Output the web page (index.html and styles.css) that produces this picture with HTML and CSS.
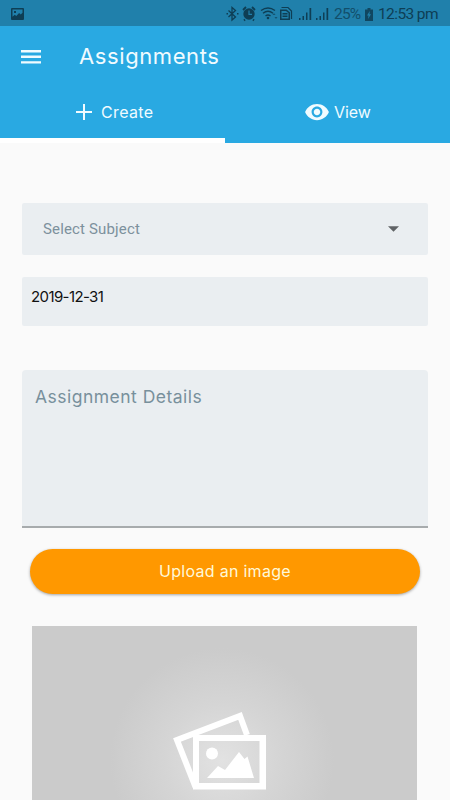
FILE: index.html
```html
<!DOCTYPE html>
<html lang="en">
<head>
<meta charset="utf-8">
<title>Assignments</title>
<link rel="stylesheet" href="styles.css">
</head>
<body>
<div class="status">
  <svg class="status-photo" width="13" height="13" viewBox="0 0 13 13"><path fill-rule="evenodd" d="M1 0h11a1 1 0 0 1 1 1v10a1 1 0 0 1-1 1H1a1 1 0 0 1-1-1V1a1 1 0 0 1 1-1zM1.500 1.500v7.200l2.200-2 1.600 1.200 2.800-3 1.600 1.500 1.800-1.600V1.500zM3 3h2v2H3z"/></svg>
  <svg class="status-icons" width="105" height="16" viewBox="225 6 105 16">
    <path d="M228.500 10.500l7 6.500-3.500 3V7.500l3.500 3-7 6.500" fill="none" stroke="#0e3e55" stroke-width="1.300"/>
    <path d="M226.500 13.100h1.500v1.500h-1.500zM237 13.100h1.500v1.500H237z"/>
    <circle cx="249" cy="14" r="5.700"/>
    <path d="M243 10l3-3M255 10l-3-3M245 19.500l-1 1M253 19.500l1 1" stroke="#0e3e55" stroke-width="1.800"/>
    <path d="M249 10.500v3.800h3" fill="none" stroke="#2080ab" stroke-width="1.200"/>
    <g fill="none" stroke="#0e3e55" stroke-width="1.400"><path d="M261 10.500q7-5 14 0M263 13.300q5-4 10 0M265.500 16q2.500-2 5 0"/></g>
    <circle cx="268" cy="18" r="1.300"/>
    <path d="M272.500 15l1.500-2 1.500 2zM274.500 17l1.500 2 1.500-2z" opacity=".65"/>
    <path fill-rule="evenodd" d="M280 9.500h6.500l3.500 3V20h-10zM281.500 11v7.500h7V13l-2.500-2zM282.500 13h5v1.500h-5zM282.500 15.500h5V17h-5z"/>
    <path d="M281.500 7.500h6.500l3.500 3.500v8" fill="none" stroke="#0e3e55" stroke-width="1.200"/>
    <path d="M299 18h1.500v2H299zM302.500 16h1.500v4h-1.500zM306 12.500h1.500V20H306zM309.500 8h1.700v12h-1.700zM316 18h1.500v2H316zM319.500 16h1.500v4h-1.500zM323 12.500h1.500V20H323zM326.500 8h1.700v12h-1.700z"/>
  </svg>
  <span class="battery-text">25%</span>
  <svg class="battery" width="8" height="13" viewBox="0 0 8 13"><path fill-rule="evenodd" d="M2.500 0h3v1.500H8V13H0V1.500h2.500zM4.800 3L2 7.500h1.600L3 11l3-4.700H4.400z"/></svg>
  <span class="clock">12:53 pm</span>
</div>
<header class="header">
  <div class="bar">
    <svg width="20" height="14" viewBox="0 0 20 14"><path d="M0 0h20v2.400H0zM0 5.600h20V8H0zM0 11.200h20v2.400H0z"/></svg>
    <h1 class="title">Assignments</h1>
  </div>
  <nav class="tabs">
    <div class="tab tab-create">
      <svg width="16" height="16" viewBox="0 0 16 16"><path d="M7 0h2v7h7v2H9v7H7V9H0V7h7z"/></svg>
      <span class="create-label">Create</span>
    </div>
    <div class="tab tab-view">
      <svg width="26" height="18" viewBox="0 3.750 24 16.500"><path d="M12 4.500C7 4.500 2.730 7.610 1 12c1.730 4.390 6 7.500 11 7.500s9.270-3.110 11-7.500c-1.730-4.390-6-7.500-11-7.500zM12 17c-2.760 0-5-2.240-5-5s2.240-5 5-5 5 2.240 5 5-2.240 5-5 5zm0-8c-1.660 0-3 1.340-3 3s1.340 3 3 3 3-1.340 3-3-1.340-3-3-3z"/></svg>
      <span class="view-label">View</span>
    </div>
  </nav>
</header>
<main class="form">
  <div class="field select"><span>Select Subject</span><svg width="11" height="6" viewBox="0 0 12 6"><path d="M0 0h12L6 6z"/></svg></div>
  <div class="field date"><span>2019-12-31</span></div>
  <div class="field details"><span>Assignment Details</span></div>
  <div class="upload"><span>Upload an image</span></div>
  <div class="preview">
    <svg width="94" height="80" viewBox="173 711 94 80">
      <path d="M195.500 787L177 740l63-24 7 19" fill="none" stroke="#fff" stroke-width="6"/>
      <path fill="#fff" fill-rule="evenodd" d="M193 735h73v54.500h-73zM199 741v42h60.500v-42z"/>
      <circle cx="212" cy="753.500" r="6" fill="#fff"/>
      <path d="M207 778l11-12 7 4 14-18 5.500 7 3-2.500L254 778z" fill="#fff"/>
    </svg>
  </div>
</main>
</body>
</html>
```

FILE: styles.css
```css
* { box-sizing: border-box; }
body {
  margin: 0;
  width: 450px;
  height: 800px;
  overflow: hidden;
  background: #fafafa;
  font-family: Inter, "Liberation Sans", sans-serif;
}
svg { display: block; flex: none; }
span, h1 { white-space: nowrap; }
.status {
  height: 26px;
  display: flex;
  align-items: center;
  padding: 2px 0 0 11px;
  background: #2080ab;
  color: #0e3e55;
  fill: #0e3e55;
  font: 16px/24px Roboto, sans-serif;
}
.status-icons { margin-left: 201px; }
.battery-text { margin-left: 4px; width: 27px; font-size: 15.500px; letter-spacing: -0.800px; opacity: .75; }
.battery { margin-left: 4px; opacity: .85; }
.clock { margin-left: 5px; font-size: 15.500px; letter-spacing: -0.600px; }
.header { height: 117px; background: #29a9e2; color: #f0fbff; fill: #f0fbff; }
.bar { height: 61px; display: flex; align-items: center; padding-left: 21px; }
.title { margin: 0 0 1px 38px; font-size: 22px; font-weight: 400; letter-spacing: 0.600px; }
.tabs { display: flex; height: 56px; }
.tab { width: 225px; display: flex; align-items: center; padding-bottom: 6px; font-size: 16px; }
.tab-create { padding-left: 76px; border-bottom: 5px solid #fff; padding-bottom: 1px; }
.create-label { margin-left: 9px; letter-spacing: 0.350px; }
.tab-view { padding-left: 79px; }
.view-label { margin-left: 4px; letter-spacing: -0.100px; }
.form { padding: 60px 22px 0; }
.field { background: #eaeef1; border-radius: 2px; display: flex; }
.select {
  height: 52px;
  align-items: center;
  justify-content: space-between;
  padding: 0 29px 0 21px;
  color: #7d919d;
  font: 15px/20px Roboto, sans-serif;
  letter-spacing: 0.150px;
}
.select svg { fill: #606366; }
.date {
  margin-top: 22px;
  height: 49px;
  padding: 10px 9px;
  color: #111;
  font-size: 15px;
  line-height: 20px;
  letter-spacing: -0.600px;
}
.details {
  margin-top: 44px;
  height: 158px;
  padding: 15px 13px;
  border-bottom: 2px solid #a7abad;
  border-radius: 4px 4px 0 0;
  color: #78909c;
  font-size: 17.500px;
  line-height: 24px;
  letter-spacing: 0.480px;
}
.upload {
  margin: 21px 8px 0;
  height: 45px;
  display: flex;
  align-items: center;
  justify-content: center;
  padding-bottom: 2px;
  border-radius: 23px;
  background: #ff9800;
  color: #fff8d8;
  font-size: 16px;
  letter-spacing: 0.280px;
  box-shadow: 0 1px 3px rgba(0, 0, 0, .35);
}
.preview {
  margin: 32px 11px 0 10px;
  height: 174px;
  padding: 85px 0 0 141px;
  background: radial-gradient(circle 112px at 190px 134px, #e2e2e2, #d5d5d5 50%, #cbcbcb);
}
```
